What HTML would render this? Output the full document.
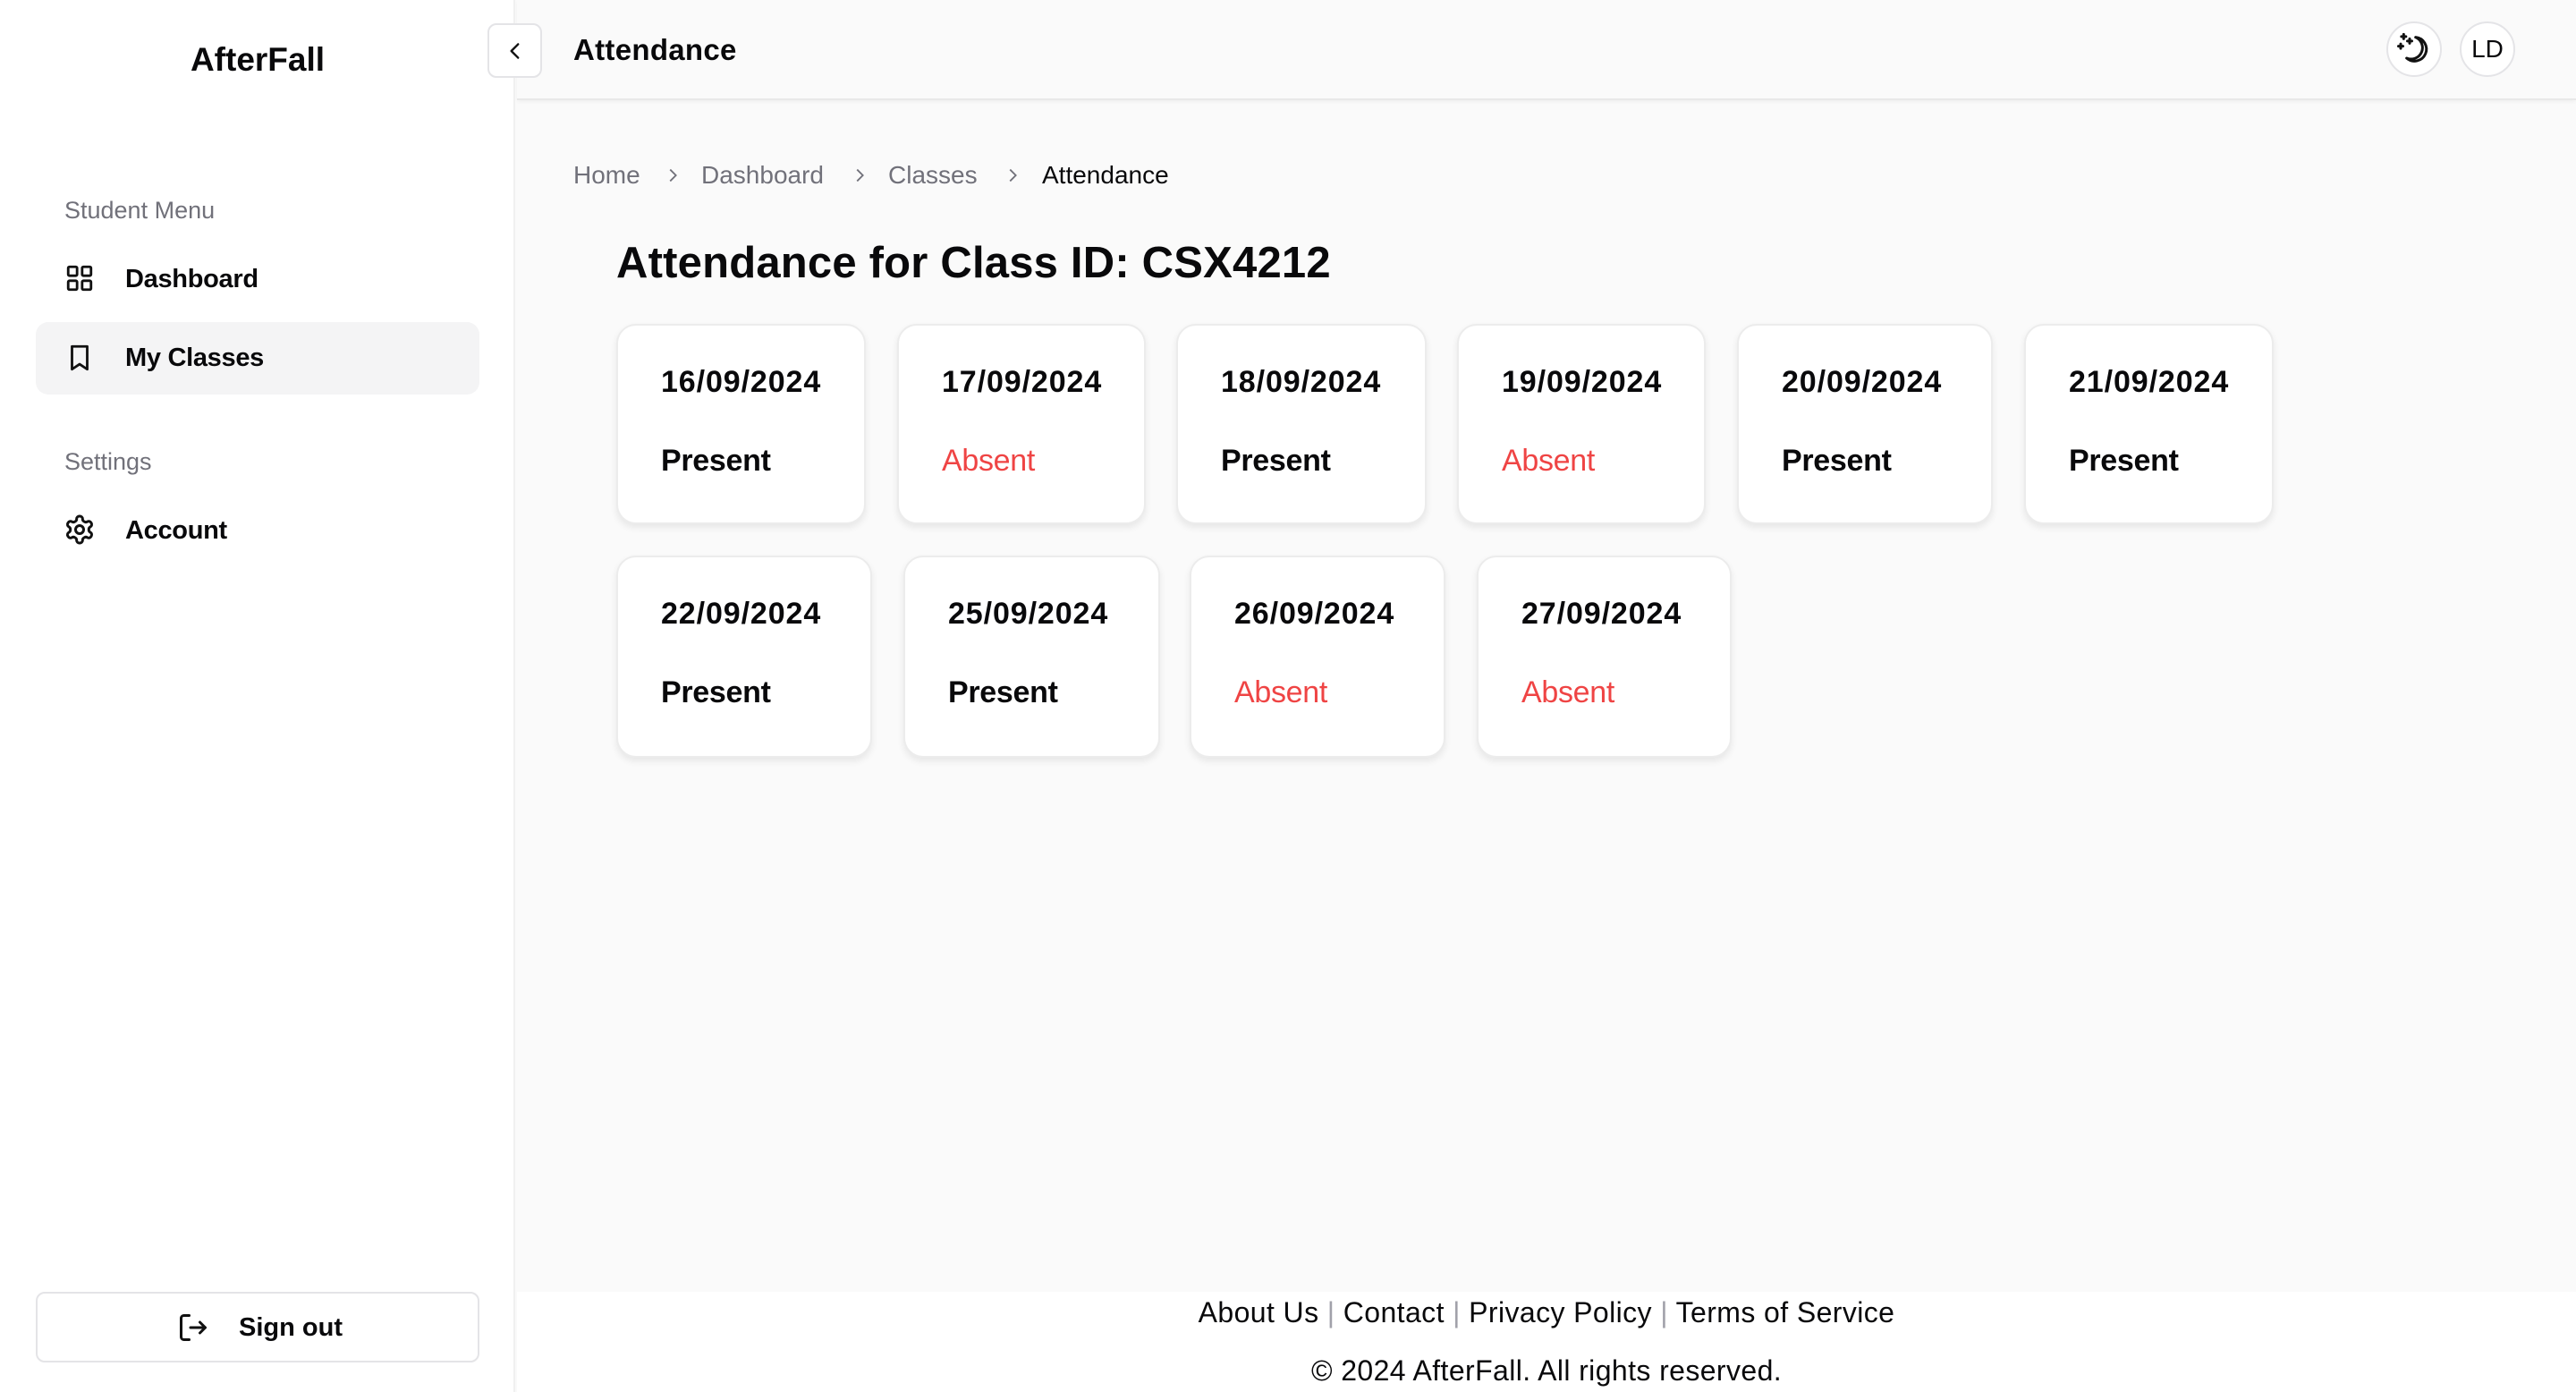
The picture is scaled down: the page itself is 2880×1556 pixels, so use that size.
<!DOCTYPE html>
<html><head><meta charset="utf-8"><style>
*{box-sizing:border-box;margin:0;padding:0}
body{width:2880px;height:1556px;position:relative;overflow:hidden;background:#fafafa;font-family:"Liberation Sans",sans-serif;color:#09090b}
.abs{position:absolute}
#side{left:0;top:0;width:576px;height:1556px;background:#fff;border-right:2px solid #f0f0f0}
.lbl{color:#71717a;font-size:27px;left:72px}
.item{left:140px;font-size:29px;font-weight:600;letter-spacing:-0.3px}
.card{position:absolute;background:#fff;border:2px solid #ececec;border-radius:22px;box-shadow:0 4px 8px rgba(0,0,0,0.08)}
.card .d{position:absolute;left:48px;top:44px;font-size:34px;font-weight:700;letter-spacing:0.9px}
.card .s{position:absolute;left:48px;top:132px;font-size:34px;font-weight:700;letter-spacing:-0.3px}
.card .s.a{color:#ef4444;font-weight:400}
.bc{top:180px;font-size:28px;color:#71717a}
.chev{position:absolute;top:185px}
</style></head><body>
<div id="side" class="abs">
<div class="abs" style="left:0;width:576px;text-align:center;top:46px;font-size:37px;font-weight:700;letter-spacing:0px">AfterFall</div>
<div class="abs lbl" style="top:220px">Student Menu</div>
<svg class="abs" style="left:72px;top:294px" width="34" height="34" viewBox="0 0 24 24" fill="none" stroke="#111" stroke-width="2"><rect x="3" y="3" width="7" height="7" rx="1"/><rect x="14" y="3" width="7" height="7" rx="1"/><rect x="3" y="14" width="7" height="7" rx="1"/><rect x="14" y="14" width="7" height="7" rx="1"/></svg>
<div class="abs item" style="top:296px">Dashboard</div>
<div class="abs" style="left:40px;top:360px;width:496px;height:81px;background:#f4f4f5;border-radius:14px"></div>
<svg class="abs" style="left:72px;top:383px" width="34" height="34" viewBox="0 0 24 24" fill="none" stroke="#111" stroke-width="2" stroke-linejoin="round"><path d="M6 3h12v18l-6-4-6 4z"/></svg>
<div class="abs item" style="top:384px">My Classes</div>
<div class="abs lbl" style="top:501px">Settings</div>
<svg class="abs" style="left:71px;top:574px" width="36" height="36" viewBox="0 0 24 24" fill="none" stroke="#111" stroke-width="2" stroke-linejoin="round"><path d="M12.22 2h-.44a2 2 0 0 0-2 2v.18a2 2 0 0 1-1 1.730l-.43.25a2 2 0 0 1-2 0l-.15-.08a2 2 0 0 0-2.73.73l-.22.38a2 2 0 0 0 .73 2.73l.15.1a2 2 0 0 1 1 1.72v.51a2 2 0 0 1-1 1.74l-.15.09a2 2 0 0 0-.73 2.73l.22.38a2 2 0 0 0 2.730.73l.15-.08a2 2 0 0 1 2 0l.43.25a2 2 0 0 1 1 1.73V20a2 2 0 0 0 2 2h.44a2 2 0 0 0 2-2v-.18a2 2 0 0 1 1-1.73l.43-.25a2 2 0 0 1 2 0l.15.08a2 2 0 0 0 2.73-.73l.22-.39a2 2 0 0 0-.73-2.73l-.15-.08a2 2 0 0 1-1-1.74v-.5a2 2 0 0 1 1-1.74l.15-.09a2 2 0 0 0 .73-2.73l-.22-.38a2 2 0 0 0-2.73-.73l-.15.08a2 2 0 0 1-2 0l-.43-.25a2 2 0 0 1-1-1.73V4a2 2 0 0 0-2-2z"/><circle cx="12" cy="12" r="3"/></svg>
<div class="abs item" style="top:577px">Account</div>
<div class="abs" style="left:40px;top:1444px;width:496px;height:79px;border:2px solid #e4e4e7;border-radius:10px;background:#fff"></div>
<svg class="abs" style="left:198px;top:1466px" width="36" height="36" viewBox="0 0 24 24" fill="none" stroke="#111" stroke-width="2" stroke-linecap="round" stroke-linejoin="round"><path d="M9 21H5a2 2 0 0 1-2-2V5a2 2 0 0 1 2-2h4"/><path d="M10 12h11M17 8l4 4-4 4"/></svg>
<div class="abs" style="left:267px;top:1468px;font-size:29px;font-weight:600">Sign out</div>
</div>
<div class="abs" style="left:578px;top:0;width:2302px;height:112px;background:#fafafa;border-bottom:2px solid #e8e8e8;box-shadow:0 2px 4px rgba(0,0,0,0.04)"></div>
<div class="abs" style="left:545px;top:26px;width:61px;height:61px;border:2px solid #e4e4e7;border-radius:10px;background:#fff"></div>
<svg class="abs" style="left:563px;top:44px" width="26" height="26" viewBox="0 0 24 24" fill="none" stroke="#111" stroke-width="2.2" stroke-linecap="round" stroke-linejoin="round"><path d="M15 5l-7 7 7 7"/></svg>
<div class="abs" style="left:641px;top:37px;font-size:33px;font-weight:700;letter-spacing:0.3px">Attendance</div>
<div class="abs" style="left:2668px;top:24px;width:62px;height:62px;border:2px solid #e4e4e7;border-radius:50%;background:#fff"></div>
<svg class="abs" style="left:2679px;top:35px" width="40" height="40" viewBox="0 0 24 24" fill="none" stroke="#111" stroke-width="1.8" stroke-linecap="round" stroke-linejoin="round"><path d="M13 4a8 8 0 1 1-6 14 7 7 0 0 0 6-14z"/><path d="M5 2v3M3.5 3.5h3M9 5v3M7.5 6.5h3M3 8.5v3M1.5 10h3"/></svg>
<div class="abs" style="left:2750px;top:24px;width:62px;height:62px;border:2px solid #e4e4e7;border-radius:50%;background:#fff;text-align:center;line-height:58px;font-size:28px">LD</div>
<div class="abs bc" style="left:641px">Home</div>
<svg class="chev" style="left:741px" width="22" height="22" viewBox="0 0 24 24" fill="none" stroke="#71717a" stroke-width="2"><path d="M9 5l7 7-7 7"/></svg>
<div class="abs bc" style="left:784px">Dashboard</div>
<svg class="chev" style="left:950px" width="22" height="22" viewBox="0 0 24 24" fill="none" stroke="#71717a" stroke-width="2"><path d="M9 5l7 7-7 7"/></svg>
<div class="abs bc" style="left:993px">Classes</div>
<svg class="chev" style="left:1121px" width="22" height="22" viewBox="0 0 24 24" fill="none" stroke="#71717a" stroke-width="2"><path d="M9 5l7 7-7 7"/></svg>
<div class="abs bc" style="left:1165px;color:#09090b">Attendance</div>
<div class="abs" style="left:689px;top:266px;font-size:49px;font-weight:700;letter-spacing:0.2px">Attendance for Class ID: CSX4212</div>

<div class="card" style="left:689px;top:362px;width:279px;height:224px"><div class="d">16/09/2024</div><div class="s">Present</div></div>
<div class="card" style="left:1003px;top:362px;width:278px;height:224px"><div class="d">17/09/2024</div><div class="s a">Absent</div></div>
<div class="card" style="left:1315px;top:362px;width:280px;height:224px"><div class="d">18/09/2024</div><div class="s">Present</div></div>
<div class="card" style="left:1629px;top:362px;width:278px;height:224px"><div class="d">19/09/2024</div><div class="s a">Absent</div></div>
<div class="card" style="left:1942px;top:362px;width:286px;height:224px"><div class="d">20/09/2024</div><div class="s">Present</div></div>
<div class="card" style="left:2263px;top:362px;width:279px;height:224px"><div class="d">21/09/2024</div><div class="s">Present</div></div>
<div class="card" style="left:689px;top:621px;width:286px;height:226px"><div class="d">22/09/2024</div><div class="s">Present</div></div>
<div class="card" style="left:1010px;top:621px;width:287px;height:226px"><div class="d">25/09/2024</div><div class="s">Present</div></div>
<div class="card" style="left:1330px;top:621px;width:286px;height:226px"><div class="d">26/09/2024</div><div class="s a">Absent</div></div>
<div class="card" style="left:1651px;top:621px;width:285px;height:226px"><div class="d">27/09/2024</div><div class="s a">Absent</div></div>

<div class="abs" style="left:578px;top:1444px;width:2302px;height:112px;background:#fff"></div>
<div class="abs" style="left:578px;width:2302px;top:1449px;text-align:center;font-size:32px;letter-spacing:0.4px">About Us <span style="color:#a1a1aa">|</span> Contact <span style="color:#a1a1aa">|</span> Privacy Policy <span style="color:#a1a1aa">|</span> Terms of Service</div>
<div class="abs" style="left:578px;width:2302px;top:1514px;text-align:center;font-size:32px;letter-spacing:0.4px">© 2024 AfterFall. All rights reserved.</div>
</body></html>
